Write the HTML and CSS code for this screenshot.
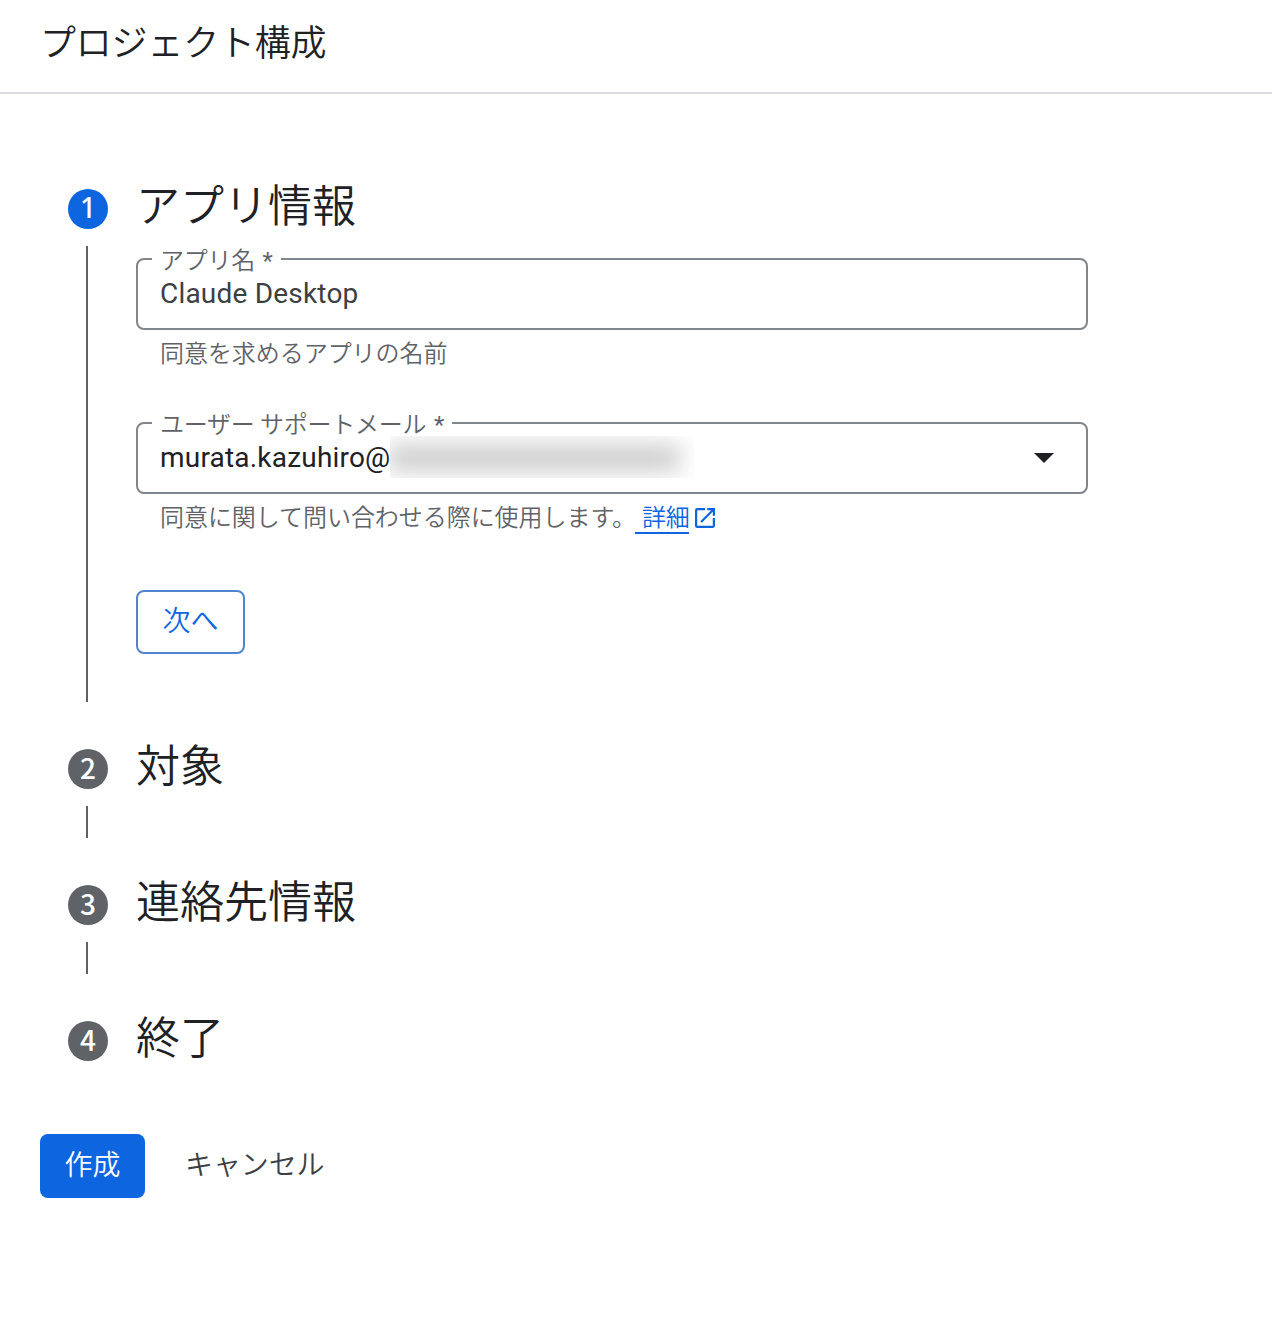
FILE: index.html
```
<!DOCTYPE html>
<html lang="ja">
<head>
    <meta charset="UTF-8">
    <meta name="viewport" content="width=device-width, initial-scale=1.0">
    <title>プロジェクト構成</title>
    <link rel="stylesheet" href="styles.css">
</head>
<body>

    <header class="page-header">
        <h1 class="page-title">プロジェクト構成</h1>
    </header>

    <main class="stepper">
        <section class="step step-open">
            <div class="step-rail">
                <span class="step-number active">1</span>
                <span class="step-line"></span>
            </div>
            <div class="step-body">
                <h2 class="step-title">アプリ情報</h2>

                <fieldset class="field">
                    <legend>アプリ名 <span class="required">*</span></legend>
                    <div class="field-value">Claude Desktop</div>
                </fieldset>
                <p class="hint">同意を求めるアプリの名前</p>

                <fieldset class="field">
                    <legend>ユーザー サポートメール <span class="required">*</span></legend>
                    <div class="field-value select-value">
                        <span class="email">murata.kazuhiro@</span>
                        <span class="redacted"><span class="smudge"></span></span>
                        <svg class="arrow" width="20" height="10" viewBox="0 0 20 10"><path d="M0 0h20L10 10z" fill="#202124"/></svg>
                    </div>
                </fieldset>
                <p class="hint">同意に関して問い合わせる際に使用します。<a class="more" href="#"><span class="more-text">詳細</span><svg width="20" height="20" viewBox="3 3 18 18"><path fill="#0d66e0" d="M19 19H5V5h7V3H5a2 2 0 0 0-2 2v14a2 2 0 0 0 2 2h14c1.100 0 2-.9 2-2v-7h-2v7zM14 3v2h3.590l-9.830 9.830 1.410 1.410L19 6.410V10h2V3h-7z"/></svg></a></p>

                <button class="next">次へ</button>
            </div>
        </section>

        <section class="step">
            <div class="step-rail">
                <span class="step-number">2</span>
                <span class="step-line"></span>
            </div>
            <h2 class="step-title">対象</h2>
        </section>

        <section class="step">
            <div class="step-rail">
                <span class="step-number">3</span>
                <span class="step-line"></span>
            </div>
            <h2 class="step-title">連絡先情報</h2>
        </section>

        <section class="step step-last">
            <div class="step-rail">
                <span class="step-number">4</span>
            </div>
            <h2 class="step-title">終了</h2>
        </section>
    </main>

    <footer class="actions">
        <button class="create">作成</button>
        <button class="cancel">キャンセル</button>
    </footer>

</body>
</html>
```
FILE: styles.css
```
* {
    box-sizing: border-box;
}
body {
    margin: 0;
    background-color: #fff;
    color: #202124;
    font-family: Roboto, "Noto Sans CJK JP", sans-serif;
    font-weight: 350;
}
h1, h2, p {
    margin: 0;
    font-weight: 350;
}
.page-header {
    display: flex;
    align-items: center;
    height: 94px;
    padding: 0 40px 4px;
    border-bottom: 2px solid #dadce0;
}
.page-title {
    font-size: 36px;
    line-height: 48px;
    letter-spacing: -0.2px;
}
.stepper {
    padding: 83px 0 0 68px;
}
.step {
    display: flex;
    gap: 28px;
    height: 136px;
}
.step-open {
    height: 560px;
}
.step-last {
    height: 114px;
}
.step-rail {
    display: flex;
    flex-direction: column;
    width: 40px;
    padding: 12px 0 35px;
}
.step-number {
    width: 40px;
    height: 40px;
    border-radius: 50%;
    background-color: #5f6368;
    color: #fff;
    font-family: "Noto Sans CJK JP", sans-serif;
    font-size: 28px;
    font-weight: 500;
    line-height: 37px;
    text-align: center;
}
.step-number.active {
    background-color: #0d66e0;
    font-family: "Noto Sans", sans-serif;
}
.step-line {
    flex: 1;
    width: 2px;
    margin: 17px 0 0 18px;
    background-color: #5f6368;
}
.step-body {
    width: 952px;
}
.step-title {
    height: 56px;
    font-size: 44px;
    line-height: 60px;
}
.field {
    height: 84px;
    margin: 13px 0 0;
    padding: 0 14px;
    border: 2px solid #80868b;
    border-radius: 8px;
}
.field legend {
    height: 26px;
    padding: 0 8px;
    color: #5f6368;
    font-size: 24px;
    line-height: 31px;
    letter-spacing: -0.25px;
}
.required {
    margin-left: 2px;
    font-weight: 400;
}
.field-value {
    padding-left: 8px;
    color: #3c4043;
    font-size: 28px;
    font-weight: 400;
    line-height: 44px;
    letter-spacing: 0.2px;
}
.select-value {
    display: flex;
    align-items: center;
    height: 42px;
    color: #202124;
}
.email {
    width: 230px;
    padding-top: 2px;
}
.redacted {
    width: 304px;
    height: 42px;
    overflow: hidden;
}
.smudge {
    display: block;
    width: 292px;
    height: 28px;
    margin: 8px 0 0 -2px;
    background-color: #cfcfcf;
    filter: blur(11px);
}
.arrow {
    margin: 2px 18px 0 auto;
}
.hint {
    height: 48px;
    padding-left: 24px;
    color: #5f6368;
    font-size: 24px;
    line-height: 48px;
    letter-spacing: -0.05px;
}
.hint + .field {
    margin-top: 32px;
}
.more {
    display: inline-flex;
    align-items: center;
    gap: 6px;
    color: #0d66e0;
    text-decoration: none;
}
.more-text {
    height: 31px;
    width: 54px;
    margin-left: -1px;
    padding-left: 7px;
    border-bottom: 2px solid #0d66e0;
    line-height: 30px;
    white-space: nowrap;
}
.more svg {
    margin-bottom: 1px;
}
button {
    height: 64px;
    padding: 0 24px 6px;
    border: none;
    border-radius: 8px;
    background: none;
    font-family: inherit;
    font-size: 28px;
    font-weight: 350;
    letter-spacing: -0.1px;
    cursor: pointer;
}
.next {
    width: 109px;
    margin-top: 48px;
    border: 2px solid #5283d0;
    color: #0d66e0;
}
.actions {
    display: flex;
    gap: 16px;
    padding: 11px 40px 0;
}
.create {
    width: 105px;
    background-color: #0d66e0;
    color: #fff;
}
.cancel {
    color: #3c4043;
}
```
